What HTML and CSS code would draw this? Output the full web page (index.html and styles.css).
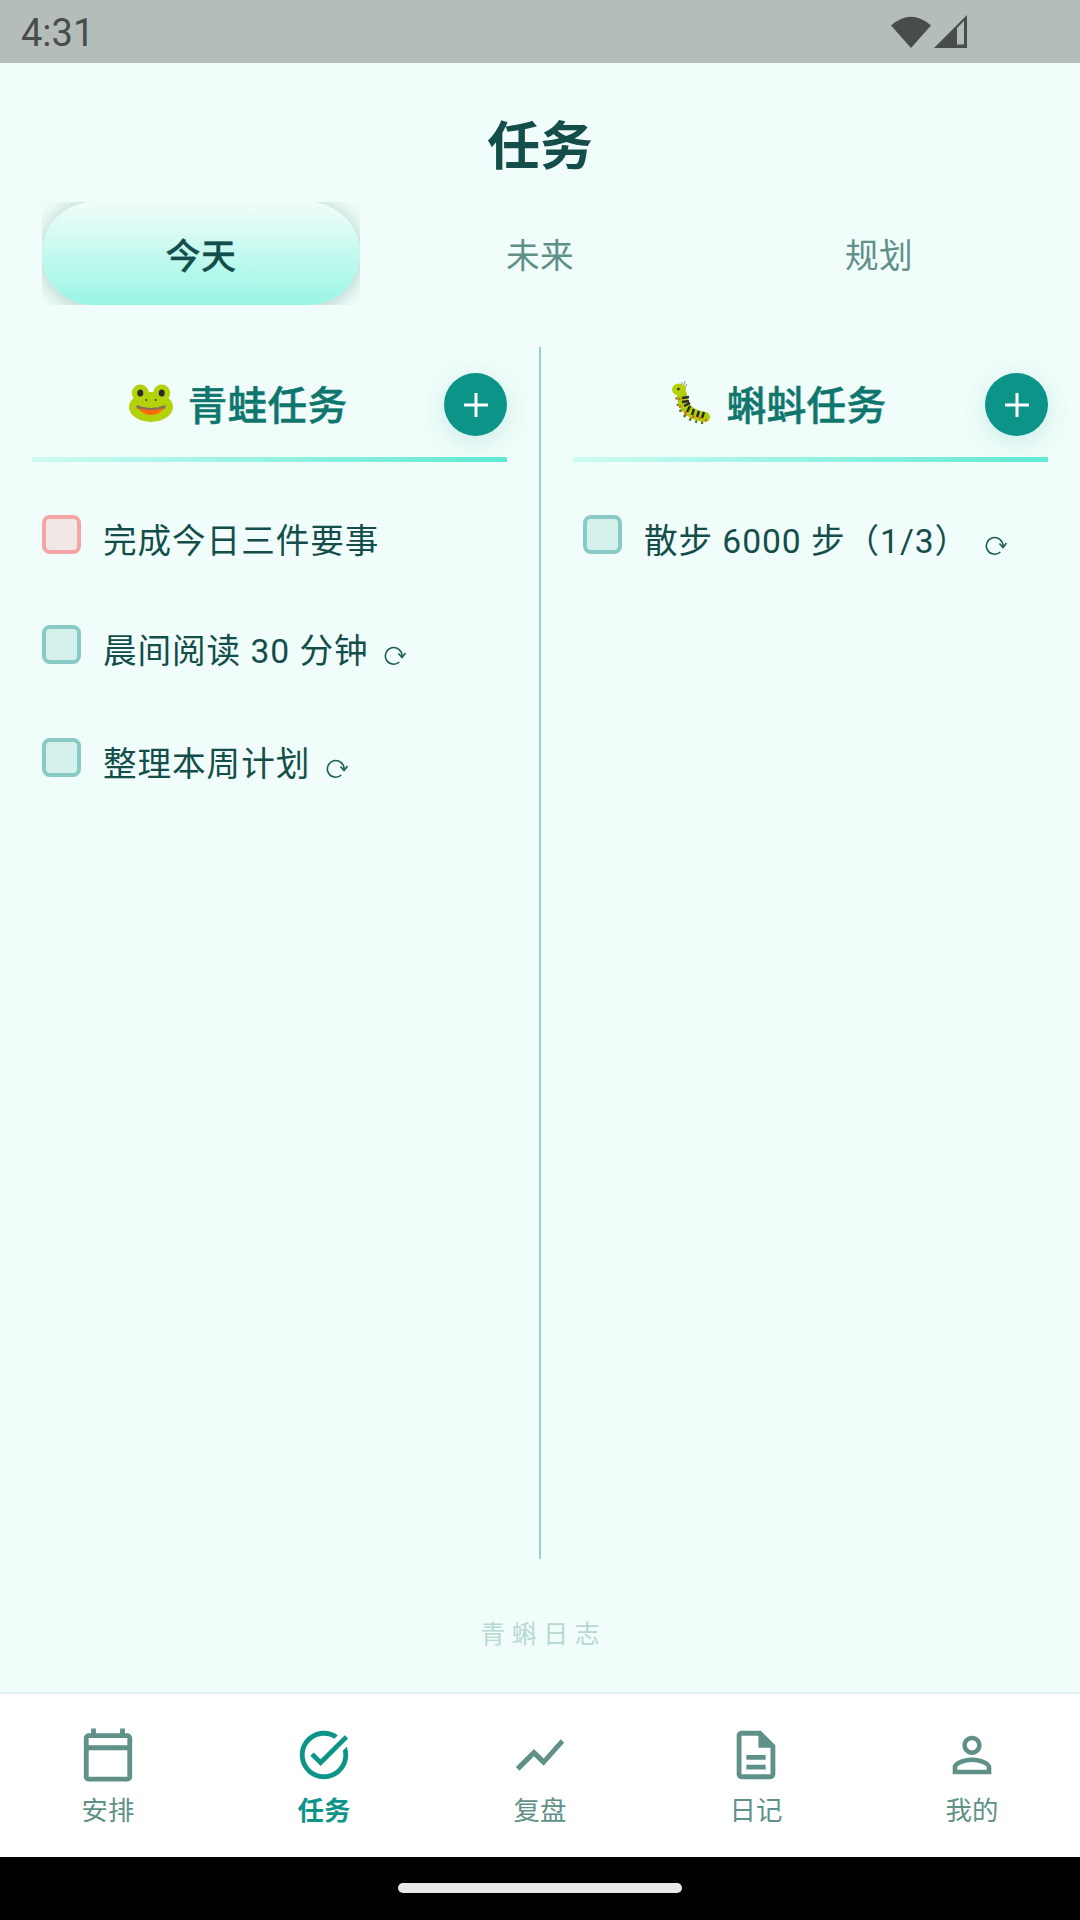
FILE: index.html
```html
<!DOCTYPE html>
<html lang="zh-CN">
<head>
  <meta charset="UTF-8" />
  <meta name="viewport" content="width=device-width, initial-scale=1" />
  <title>任务</title>
  <link rel="stylesheet" href="styles.css">
</head>
<body>
  <div class="status-bar">
    <span class="status-time">4:31</span>
    <div class="status-icons">
      <svg class="icon-wifi" viewBox="0 0 40 33"><path d="M0 10.500Q20-7 40 10.500L20 33z" /></svg>
      <svg class="icon-signal" viewBox="0 0 33 33">
        <path d="M0 33L33 0V33z" fill="#484c4b" />
        <path d="M23 13L30 6V29.500H23z" fill="#b4bdba" />
      </svg>
    </div>
  </div>

  <h1 class="page-title">任务</h1>

  <div class="tabs">
    <div class="tab-clip"><div class="tab active">今天</div></div>
    <div class="tab-clip"><div class="tab">未来</div></div>
    <div class="tab-clip"><div class="tab">规划</div></div>
  </div>

  <div class="columns">
    <section class="column">
      <div class="column-head">
        <h2 class="column-title">
          <svg class="emoji" viewBox="0 0 44 38">
            <circle cx="11.300" cy="9" r="8.500" fill="#b3d20c" />
            <circle cx="32.700" cy="9" r="8.500" fill="#b3d20c" />
            <ellipse cx="22" cy="23" rx="22" ry="15" fill="#b3d20c" />
            <ellipse cx="11.300" cy="9" rx="3" ry="3.500" fill="#2b2a28" />
            <ellipse cx="32.700" cy="9" rx="3" ry="3.500" fill="#2b2a28" />
            <circle cx="17.300" cy="16" r="1.100" fill="#3c4a10" />
            <circle cx="26.700" cy="16" r="1.100" fill="#3c4a10" />
            <path d="M7.500 21Q22 27 36.500 21Q37 24 35 25Q22 29 9 25Q7 24 7.500 21z" fill="#86705a" />
            <path d="M9 24Q22 28 35 24Q30 31 22 31Q14 31 9 24z" fill="#ff6a0a" />
          </svg>
          青蛙任务
        </h2>
        <button class="add-button">
          <svg viewBox="0 0 24 24"><path d="M11 4h2v7h7v2h-7v7h-2v-7H4v-2h7z" /></svg>
        </button>
      </div>
      <div class="task-list">
        <div class="task">
          <span class="check urgent"></span>
          <span class="task-text">完成今日三件要事</span>
        </div>
        <div class="task recurring">
          <span class="check"></span>
          <span class="task-text">晨间阅读 30 分钟<svg class="repeat" viewBox="0 0 22 20"><path d="M18 10A8.300 8.300 0 1 0 15.300 16" /><path d="M14.500 7.500L18 11.500L21.500 7" /></svg></span>
        </div>
        <div class="task recurring">
          <span class="check"></span>
          <span class="task-text">整理本周计划<svg class="repeat" viewBox="0 0 22 20"><path d="M18 10A8.300 8.300 0 1 0 15.300 16" /><path d="M14.500 7.500L18 11.500L21.500 7" /></svg></span>
        </div>
      </div>
    </section>

    <div class="divider"></div>

    <section class="column">
      <div class="column-head">
        <h2 class="column-title">
          <svg class="emoji emoji-bug" viewBox="0 0 38 43">
            <path d="M9 7L10 1M11 7L13 0M12 8L15 3" stroke="#8c9c6a" stroke-width="1" fill="none" />
            <path d="M9 16Q10 37 34 38" stroke="#66781f" stroke-width="11" fill="none" stroke-dasharray="2 3.500" />
            <path d="M10 14Q11 33 33 36" stroke="#aecb0e" stroke-width="10" fill="none" stroke-linecap="round" />
            <ellipse cx="7" cy="8.500" rx="7" ry="6" fill="#b3d20c" />
            <circle cx="6.400" cy="8" r="1.300" fill="#222" />
            <path d="M10 17L17 16M10 21L17 20M12 25L18 22M18 25L15 31M22 28L20 34M27 30L25 36M32 31L30 37" stroke="#2b2a28" stroke-width="2.400" fill="none" />
            <circle cx="7.400" cy="18" r="1.200" fill="#f0590f" />
            <circle cx="8" cy="25.700" r="1.200" fill="#f0590f" />
            <circle cx="13.400" cy="32.300" r="1.200" fill="#f0590f" />
            <circle cx="21.300" cy="35.700" r="1.200" fill="#f0590f" />
            <circle cx="28" cy="37" r="1.200" fill="#f0590f" />
            <circle cx="34" cy="39" r="1.200" fill="#f0590f" />
          </svg>
          蝌蚪任务
        </h2>
        <button class="add-button">
          <svg viewBox="0 0 24 24"><path d="M11 4h2v7h7v2h-7v7h-2v-7H4v-2h7z" /></svg>
        </button>
      </div>
      <div class="task-list">
        <div class="task recurring">
          <span class="check"></span>
          <span class="task-text">散步 6000 步（1/3）<svg class="repeat" viewBox="0 0 22 20"><path d="M18 10A8.300 8.300 0 1 0 15.300 16" /><path d="M14.500 7.500L18 11.500L21.500 7" /></svg></span>
        </div>
      </div>
    </section>
  </div>

  <div class="brand">青蝌日志</div>

  <nav class="bottom-nav">
    <div class="nav-item">
      <svg viewBox="0 0 24 24"><path d="M20 3h-1V1h-2v2H7V1H5v2H4c-1.100 0-2 .9-2 2v16c0 1.100.9 2 2 2h16c1.100 0 2-.9 2-2V5c0-1.100-.9-2-2-2zm0 2v3H4V5h16zM4 21V10h16v11H4z" /></svg>
      <span>安排</span>
    </div>
    <div class="nav-item active">
      <svg viewBox="0 0 24 24"><path d="M22 5.180L10.590 16.600l-4.240-4.240 1.410-1.410 2.830 2.830 10-10L22 5.180zM19.790 10.220C19.920 10.790 20 11.390 20 12c0 4.420-3.580 8-8 8s-8-3.580-8-8 3.580-8 8-8c1.580 0 3.040.46 4.280 1.250l1.440-1.440C16.100 2.670 14.130 2 12 2 6.480 2 2 6.480 2 12s4.480 10 10 10 10-4.480 10-10c0-1.190-.22-2.330-.6-3.390l-1.610 1.610z" /></svg>
      <span>任务</span>
    </div>
    <div class="nav-item">
      <svg viewBox="0 0 24 24"><path d="M3.500 18.490l6-6.010 4 4L22 6.920l-1.410-1.410-7.090 7.970-4-4L2 16.990z" /></svg>
      <span>复盘</span>
    </div>
    <div class="nav-item">
      <svg viewBox="0 0 24 24"><path d="M8 16h8v2H8zm0-4h8v2H8zm6-10H6c-1.100 0-2 .9-2 2v16c0 1.100.89 2 1.990 2H18c1.100 0 2-.9 2-2V8l-6-6zm4 18H6V4h7v5h5v11z" /></svg>
      <span>日记</span>
    </div>
    <div class="nav-item">
      <svg viewBox="0 0 24 24"><path d="M12 5.900c1.160 0 2.100.94 2.100 2.100s-.94 2.100-2.100 2.100S9.900 9.160 9.900 8s.94-2.100 2.100-2.100m0 9c2.970 0 6.100 1.460 6.100 2.100v1.100H5.900V17c0-.64 3.130-2.100 6.100-2.100M12 4C9.790 4 8 5.790 8 8s1.790 4 4 4 4-1.790 4-4-1.790-4-4-4zm0 9c-2.670 0-8 1.340-8 4v3h16v-3c0-2.660-5.330-4-8-4z" /></svg>
      <span>我的</span>
    </div>
  </nav>

  <div class="home-bar"><div class="home-pill"></div></div>
</body>
</html>
```

FILE: styles.css
```css
* {
  box-sizing: border-box;
}

body {
  margin: 0;
  width: 1080px;
  height: 1920px;
  display: flex;
  flex-direction: column;
  overflow: hidden;
  font-family: Roboto, 'Noto Sans CJK SC', sans-serif;
  background: #f0fdfa;
  color: #134e4a;
}

.status-bar {
  height: 63px;
  flex-shrink: 0;
  display: flex;
  align-items: center;
  justify-content: space-between;
  padding: 0 113px 0 21px;
  background: #b4bdba;
}

.status-time {
  padding-top: 3px;
  font-size: 38px;
  color: #484c4b;
}

.status-icons {
  display: flex;
  align-items: center;
  gap: 3px;
}

.icon-wifi {
  width: 40px;
  height: 33px;
  fill: #484c4b;
}

.icon-signal {
  width: 33px;
  height: 33px;
}

.page-title {
  margin: 52px 0 23px;
  font-size: 52.8px;
  line-height: 64px;
  font-weight: 700;
  text-align: center;
}

.tabs {
  display: flex;
  gap: 21px;
  padding: 0 42px;
}

.tab-clip {
  flex: 1;
  height: 103px;
  overflow: hidden;
}

.tab {
  height: 100%;
  display: flex;
  align-items: center;
  justify-content: center;
  border-radius: 52px;
  font-size: 33.6px;
  letter-spacing: 0.5px;
  color: #5f9189;
}

.tab.active {
  background: linear-gradient(to bottom, #f0fdfa, #99f6e4);
  box-shadow: 0 2px 20px rgba(13, 90, 80, 0.32);
  font-size: 35px;
  font-weight: 500;
  -webkit-text-stroke: 0.3px currentColor;
  color: #134e4a;
}

.columns {
  margin-top: 42px;
  height: 1212px;
  flex-shrink: 0;
  display: flex;
}

.column {
  flex: 1;
  padding: 0 32px;
}

.divider {
  width: 2px;
  background: #8fd5c9;
}

.column-head {
  display: flex;
  align-items: center;
  padding: 26px 0 21px;
  border-bottom: 5px solid;
  border-image: linear-gradient(to right, #ccfbf1, #5eead4) 1;
}

.column-title {
  flex: 1;
  margin: 0 0 4px;
  display: flex;
  align-items: center;
  justify-content: center;
  gap: 15px;
  font-size: 39.5px;
  letter-spacing: 0.4px;
  font-weight: 500;
  -webkit-text-stroke: 0.5px currentColor;
  color: #0f766e;
}

.emoji {
  width: 44px;
  height: 38px;
}

.emoji-bug {
  width: 38px;
  height: 43px;
  margin-right: 2px;
}

.add-button {
  width: 63px;
  height: 63px;
  padding: 0;
  border: none;
  border-radius: 50%;
  display: flex;
  align-items: center;
  justify-content: center;
  background: #0d9488;
  box-shadow: 0 6px 24px rgba(13, 148, 136, 0.16);
}

.add-button svg {
  width: 36px;
  height: 36px;
  fill: #fff;
}

.task-list {
  padding: 53px 10px 0;
}

.task {
  display: flex;
  align-items: flex-start;
  gap: 22px;
  height: 110px;
}

.task.recurring {
  height: 113px;
}

.check {
  width: 39px;
  height: 39px;
  flex-shrink: 0;
  border: 4px solid #88cbc6;
  border-radius: 8px;
  background: #d6f0ec;
}

.check.urgent {
  border-color: #f5a5a5;
  background: #f1e7e6;
}

.task-text {
  margin-top: 8px;
  font-size: 33.6px;
  line-height: 38px;
  letter-spacing: 0.96px;
  white-space: nowrap;
  color: #134e4a;
}

.repeat {
  width: 22px;
  height: 20px;
  margin-left: 16px;
  vertical-align: -3px;
  fill: none;
  stroke: #1c5c58;
  stroke-width: 1.6;
}

.brand {
  flex: 1;
  padding: 61px 0 0 6.5px;
  font-size: 25px;
  line-height: 30px;
  letter-spacing: 6.5px;
  text-align: center;
  color: #b8d8d2;
}

.bottom-nav {
  height: 165px;
  flex-shrink: 0;
  display: flex;
  padding-top: 32px;
  border-top: 2px solid #e2f1ee;
  background: #fff;
}

.nav-item {
  flex: 1;
  display: flex;
  flex-direction: column;
  align-items: center;
  gap: 10px;
  font-size: 26.4px;
  line-height: 34px;
  color: #5f9189;
}

.nav-item svg {
  width: 58px;
  height: 58px;
  fill: #5f9189;
}

.nav-item.active {
  color: #0d9488;
  font-weight: 700;
}

.nav-item.active svg {
  fill: #0d9488;
}

.home-bar {
  height: 63px;
  flex-shrink: 0;
  display: flex;
  justify-content: center;
  padding-top: 26px;
  background: #000;
}

.home-pill {
  width: 284px;
  height: 10px;
  border-radius: 5px;
  background: #e8e8e8;
}
```
